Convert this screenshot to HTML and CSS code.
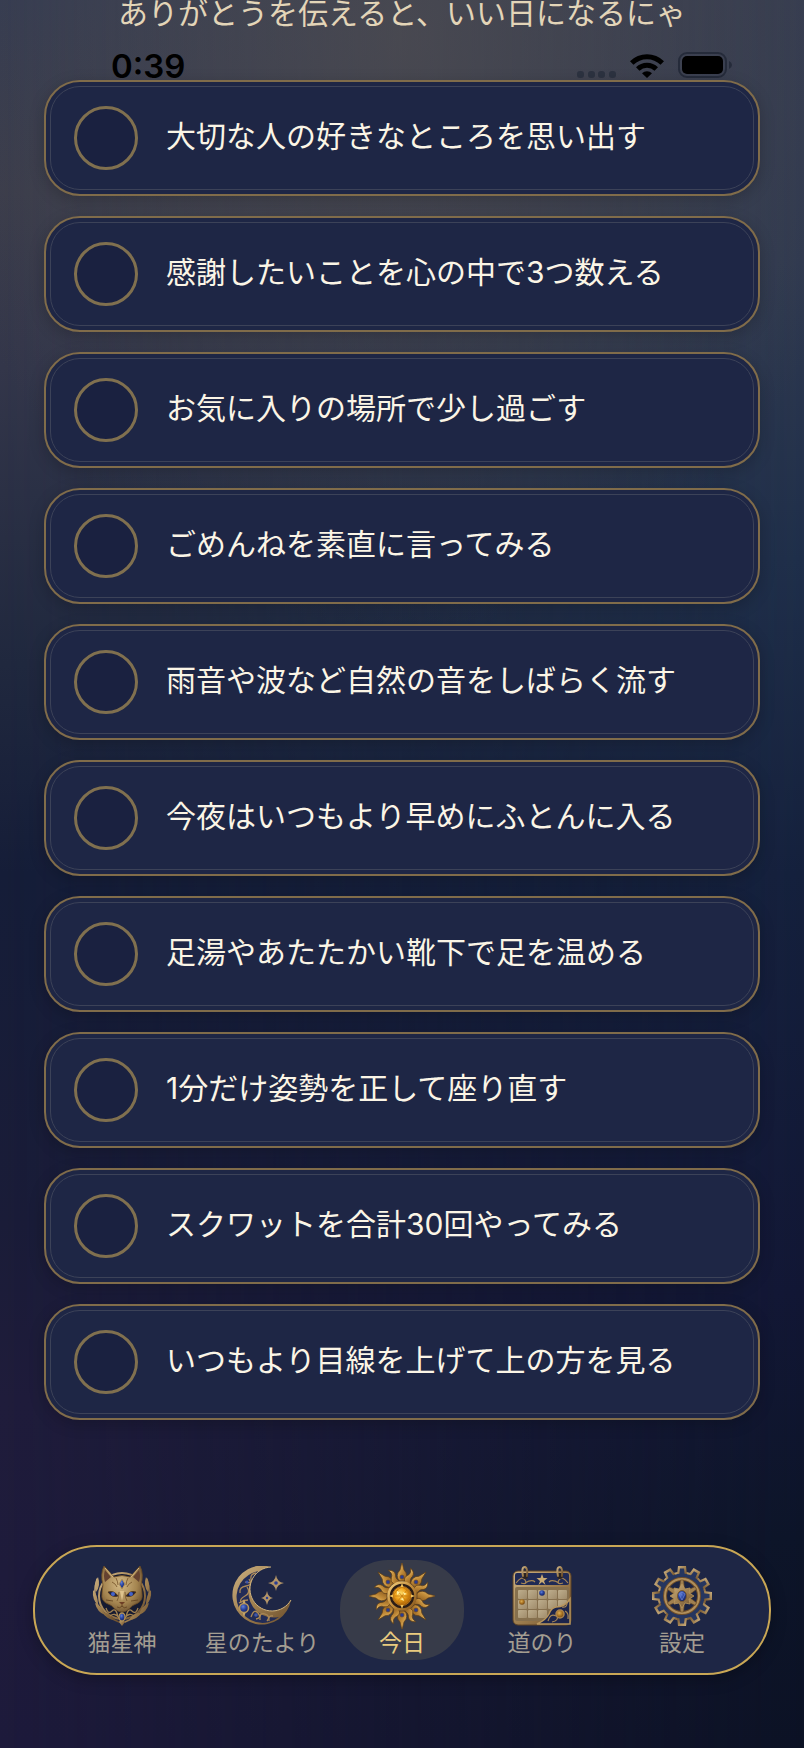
FILE: index.html
```html
<!DOCTYPE html>
<html lang="ja">
<head>
<meta charset="utf-8">
<meta name="viewport" content="width=device-width, initial-scale=1">
<title>今日</title>
<link rel="stylesheet" href="styles.css">
</head>
<body>
<svg class="defs" aria-hidden="true">
  <defs>
    <linearGradient id="gold" x1="0" y1="0" x2="1" y2="1"><stop offset="0" stop-color="#cdb283"/><stop offset=".5" stop-color="#a08050"/><stop offset="1" stop-color="#6b4d2b"/></linearGradient>
    <linearGradient id="bright" x1="0" y1="0" x2="1" y2="1"><stop offset="0" stop-color="#f3cf80"/><stop offset=".5" stop-color="#c28c39"/><stop offset="1" stop-color="#85551c"/></linearGradient>
    <radialGradient id="face" cx=".45" cy=".4" r=".7"><stop offset="0" stop-color="#d3b985"/><stop offset=".6" stop-color="#a4844f"/><stop offset="1" stop-color="#604528"/></radialGradient>
    <radialGradient id="sapphire" cx=".4" cy=".35" r=".7"><stop offset="0" stop-color="#6280d8"/><stop offset=".45" stop-color="#2a459f"/><stop offset="1" stop-color="#111d5c"/></radialGradient>
    <radialGradient id="amber" cx=".42" cy=".38" r=".65"><stop offset="0" stop-color="#ffe070"/><stop offset=".45" stop-color="#f0a31c"/><stop offset="1" stop-color="#9a5200"/></radialGradient>
    <radialGradient id="topaz" cx=".42" cy=".38" r=".65"><stop offset="0" stop-color="#d9ac55"/><stop offset=".5" stop-color="#ad7624"/><stop offset="1" stop-color="#6d420f"/></radialGradient>
    <linearGradient id="stone" x1="0" y1="0" x2="1" y2="1"><stop offset="0" stop-color="#beae8d"/><stop offset="1" stop-color="#a08c6b"/></linearGradient>
  </defs>
</svg>

<div class="screen">
  <h1 class="headline">ありがとうを伝えると、いい日になるにゃ</h1>

  <div class="status">
    <time class="clock">0:39</time>
    <div class="signals">
      <svg class="dots" viewBox="0 0 40 8" aria-hidden="true"><g fill="#2c3240"><rect x="1" y="1" width="7" height="7" rx="3"/><rect x="12" y="1" width="7" height="7" rx="3"/><rect x="22" y="1" width="7" height="7" rx="3"/><rect x="33" y="1" width="7" height="7" rx="3"/></g></svg>
      <svg class="wifi" viewBox="0 0 34 25" aria-hidden="true"><path d="M0 8.300a24 24 0 0 1 34 0l-3.500 3.500a19.200 19.200 0 0 0-27 0z"/><path d="M6 14.200a15.600 15.600 0 0 1 22 0l-3.500 3.500a10.700 10.700 0 0 0-15 0z"/><path d="M12 20.200a7.200 7.200 0 0 1 10 0L17 25z"/></svg>
      <svg class="battery" viewBox="0 0 54 26" aria-hidden="true"><rect x="1" y="1" width="47" height="24" rx="8" fill="none" stroke="#252b3a" stroke-width="2"/><rect x="4" y="4" width="41" height="18" rx="5"/><path d="M51 9q3 1.500 3 4t-3 4z" fill="#252b3a"/></svg>
    </div>
  </div>

  <main class="tasks">
    <label class="task"><input class="check" type="checkbox"><span class="text">大切な人の好きなところを思い出す</span></label>
    <label class="task"><input class="check" type="checkbox"><span class="text">感謝したいことを心の中で3つ数える</span></label>
    <label class="task"><input class="check" type="checkbox"><span class="text">お気に入りの場所で少し過ごす</span></label>
    <label class="task"><input class="check" type="checkbox"><span class="text">ごめんねを素直に言ってみる</span></label>
    <label class="task"><input class="check" type="checkbox"><span class="text">雨音や波など自然の音をしばらく流す</span></label>
    <label class="task"><input class="check" type="checkbox"><span class="text">今夜はいつもより早めにふとんに入る</span></label>
    <label class="task"><input class="check" type="checkbox"><span class="text">足湯やあたたかい靴下で足を温める</span></label>
    <label class="task"><input class="check" type="checkbox"><span class="text">1分だけ姿勢を正して座り直す</span></label>
    <label class="task"><input class="check" type="checkbox"><span class="text">スクワットを合計30回やってみる</span></label>
    <label class="task"><input class="check" type="checkbox"><span class="text">いつもより目線を上げて上の方を見る</span></label>
  </main>

  <nav class="tabs" aria-label="メイン">
    <a class="tab" href="#cat">
      <svg class="icon" viewBox="0 0 60 60" aria-hidden="true">
        <circle cx="30" cy="30" r="23" fill="#161a30" stroke="url(#gold)" stroke-width="2"/>
        <g fill="none" stroke="url(#gold)" stroke-width="1.500" stroke-linecap="round"><path d="M5 13C-1 32 5 48 27 56"/><path d="M55 13c6 19 0 35-22 43"/></g>
        <g fill="url(#gold)"><path d="M6 11q-5 8-2 15 5-6 2-15zM1 24q-1 10 5 15 0-10-5-15zM3 37q2 9 10 12-2-9-10-12zM10 46q4 7 13 8-4-7-13-8z"/><path d="M54 11q5 8 2 15-5-6-2-15zM59 24q1 10-5 15 0-10 5-15zM57 37q-2 9-10 12 2-9 10-12zM50 46q-4 7-13 8 4-7 13-8z"/></g>
        <g fill="none" stroke="#a08050" stroke-width="1.300"><path d="M14 42q2 7 6 3t6 6M46 42q-2 7-6 3t-6 6M18 50q5-4 9 2M42 50q-5-4-9 2"/></g>
        <path d="M12 0Q8 8 11 19q-1 5-1 9-1 6 4 9 6 2 9 6 3 3 7 3t7-3q3-4 9-6 5-3 4-9 0-4-1-9Q52 8 48 0L38 11q-8-3-16 0z" fill="url(#face)" stroke="#6f4e25" stroke-width=".8"/>
        <path d="M13 4q-2 6 0 12l6-5zM47 4q2 6 0 12l-6-5z" fill="#654230"/>
        <path d="M13 2l8 9M47 2l-8 9" stroke="#d4b781"/>
        <g fill="none" stroke="#79582e" stroke-width=".9"><path d="M24 12q2 4 2 7M36 12q-2 4-2 7M20 16q4 2 5 5M40 16q-4 2-5 5"/><path d="M27 26q0 6-2 9M33 26q0 6 2 9"/></g>
        <path d="M28 25l2 10 2-10z" fill="#dfc38d"/>
        <path d="M16 26q6-2 10 4-6 2-10-4zM44 26q-6-2-10 4 6 2 10-4z" fill="#1b2148" stroke="#513312" stroke-width=".8"/>
        <circle cx="21" cy="28" r="2" fill="#4463c9"/><circle cx="39" cy="28" r="2" fill="#4463c9"/>
        <path d="M27 36h6l-3 3z" fill="#6d3e25"/><path d="M30 39v2M30 40q-2 3-5 1M30 40q2 3 5 1M14 34l7 1M46 34l-7 1" fill="none" stroke="#60401f" stroke-width=".8"/>
        <path d="M30 13l3 5-3 5-3-5z" fill="url(#sapphire)" stroke="#b39257"/>
        <path d="M30 52l3 4-3 4-3-4z" fill="url(#gold)"/>
        <ellipse cx="30" cy="51" rx="3" ry="4" fill="url(#sapphire)" stroke="#b39257" stroke-width="1.300"/>
      </svg>
      <span>猫星神</span>
    </a>
    <a class="tab" href="#letters">
      <svg class="icon" viewBox="0 0 60 60" aria-hidden="true">
        <path d="M39 1A29.500 29.500 0 1 0 59 34A22 22 0 1 1 39 1z" fill="url(#gold)"/>
        <path d="M28 5A26 26 0 1 0 47 51A25.300 25.300 0 0 1 28 5z" fill="#222c57"/>
        <g fill="none" stroke="#a98756" stroke-width="1.300"><path d="M24 7q-6 1-5 6t-6 3"/><path d="M17 13q4 6-3 7t-6 7"/><path d="M15 21q4 6-2 9t-4 7"/><path d="M19 51q3-9 7-4t-2 6"/><path d="M28 54q-1-8 5-6t2 7"/><path d="M37 55q-1-6 4-5"/><path d="M16 34q-5 0-9 3"/></g>
        <path d="M59 34A22 22 0 1 1 39 1" fill="none" stroke="#cfb27d" stroke-width="1"/>
        <circle cx="12" cy="42" r="4.500" fill="url(#sapphire)" stroke="#b6955c" stroke-width="1.600"/>
        <path d="M12 33l1.500 4h-3zM12 51l1.500-4h-3z" fill="#c4a469"/>
        <circle cx="15" cy="16" r="1.500" fill="#3f56ab"/><circle cx="24" cy="49" r="1.800" fill="#3f56ab"/>
        <path d="M44 9q1 7 8 8-7 1-8 8-1-7-8-8 7-1 8-8zM35 25q1 6 6 7-5 1-6 7-1-6-6-7 5-1 6-7z" fill="#b29468"/>
        <circle cx="44" cy="17" r="1.800" fill="#293d94"/><circle cx="35" cy="32" r="1.200" fill="#293d94"/>
      </svg>
      <span>星のたより</span>
    </a>
    <a class="tab active" href="#today" aria-current="page">
      <svg class="icon sun" viewBox="-33 -33 66 66" aria-hidden="true">
        <defs>
          <path id="ray" d="M0-34l2 8q5 5 1 11h-6q-4-6 1-11z" fill="url(#bright)" stroke="#5b3b16" stroke-width=".7"/>
          <path id="flame" d="M-3-14q-3-4 0-7 3-3 0-8 6 2 5 7-2 4 2 8z" fill="url(#bright)" stroke="#5b3b16" stroke-width=".7"/>
        </defs>
        <use href="#ray"/><use href="#ray" transform="rotate(45)"/><use href="#ray" transform="rotate(90)"/><use href="#ray" transform="rotate(135)"/><use href="#ray" transform="rotate(180)"/><use href="#ray" transform="rotate(225)"/><use href="#ray" transform="rotate(270)"/><use href="#ray" transform="rotate(315)"/>
        <use href="#flame" transform="rotate(23)"/><use href="#flame" transform="rotate(68)"/><use href="#flame" transform="rotate(113)"/><use href="#flame" transform="rotate(158)"/><use href="#flame" transform="rotate(203)"/><use href="#flame" transform="rotate(248)"/><use href="#flame" transform="rotate(293)"/><use href="#flame" transform="rotate(338)"/>
        <g fill="#2a3c94" stroke="#6b481b" stroke-width=".6"><circle cy="-19" r="2"/><circle cy="19" r="2"/><circle cx="14" cy="-14" r="2"/><circle cx="-14" cy="-14" r="2"/><circle cx="14" cy="14" r="2"/><circle cx="-14" cy="14" r="2"/></g>
        <circle r="13.500" fill="#2b1d16" stroke="url(#bright)" stroke-width="2.500"/>
        <circle r="9.500" fill="url(#amber)" stroke="#a56c20"/>
        <path d="M-5-6L0-9l5 3 4 6-4 6-5 3-5-3-4-6zM-5-6L5 6M5-6L-5 6M-9 0H9" fill="none" stroke="#c57c10" stroke-width=".8"/>
        <path d="M-5-5l3 1-3 3zM1-4l4 2-3 1zM-2 3l3-1 1 3z" fill="#fff0a0"/>
        <path d="M0-13l1.500 4h-3zM0 13l1.500-4h-3zM-13 0l4-1.500v3zM13 0l-4-1.500v3z" fill="#f0c25e"/>
      </svg>
      <span>今日</span>
    </a>
    <a class="tab" href="#path">
      <svg class="icon" viewBox="0 0 60 60" aria-hidden="true">
        <rect x="1" y="5" width="58" height="54" rx="5" fill="url(#gold)" stroke="#5e4325"/>
        <rect x="3" y="7" width="54" height="12" rx="2" fill="#202a55"/>
        <g fill="none" stroke="#a68656" stroke-width="1.200"><path d="M4 17q6-8 9-3t-4 3M13 17q7-4 10-1M56 17q-6-8-9-3t4 3M47 17q-7-4-10-1"/></g>
        <path d="M30 8l1.500 4h4l-3.500 3 1.500 4-3.500-3-3.500 3 1.500-4-3.500-3h4z" fill="#c9aa73"/>
        <rect x="3" y="21" width="54" height="34" rx="2" fill="#86704e"/>
        <g fill="url(#stone)"><rect x="6" y="24" width="9" height="9" rx="1"/><rect x="16" y="24" width="9" height="9" rx="1"/><rect x="26" y="24" width="9" height="9" rx="1"/><rect x="36" y="24" width="9" height="9" rx="1"/><rect x="46" y="24" width="9" height="9" rx="1"/><rect x="6" y="34" width="9" height="9" rx="1"/><rect x="16" y="34" width="9" height="9" rx="1"/><rect x="26" y="34" width="9" height="9" rx="1"/><rect x="36" y="34" width="9" height="9" rx="1"/><rect x="46" y="34" width="9" height="9" rx="1"/><rect x="6" y="44" width="9" height="8" rx="1"/><rect x="16" y="44" width="9" height="8" rx="1"/><rect x="26" y="44" width="9" height="8" rx="1"/></g>
        <path d="M58 33q-5 8-14 8-5 1-7 7-3 6-12 10h33z" fill="#1c244b" stroke="#b7955c" stroke-width="1.500"/>
        <path d="M36 55q2-8 8-5M40 56q7-1 5-7M50 41q5 1 5-4M53 45q4 2 3 8" fill="none" stroke="#a68656" stroke-width="1.200"/>
        <circle cx="48" cy="48" r="4" fill="url(#topaz)" stroke="#a8824f" stroke-width="1.500"/>
        <circle cx="10" cy="36" r="2.800" fill="url(#topaz)"/><circle cx="30" cy="27" r="2.800" fill="url(#sapphire)"/>
        <g fill="#2b2321"><circle cx="13" cy="10" r="3"/><circle cx="48" cy="10" r="3"/></g>
        <g fill="none" stroke="url(#gold)" stroke-width="2" stroke-linecap="round"><path d="M11 10q-2-9 2-9 3 1 2 9"/><path d="M46 10q-2-9 2-9 3 1 2 9"/></g>
      </svg>
      <span>道のり</span>
    </a>
    <a class="tab" href="#settings">
      <svg class="icon" viewBox="-30 -30 60 60" aria-hidden="true">
        <defs>
          <path id="tooth" d="M-5-21l1-9h8l1 9z"/>
          <path id="toothfill" d="M-3-19l1-8.500h4l1 8.500z"/>
          <path id="spoke" d="M-1.500-16h3l1 9h-5z"/>
        </defs>
        <g fill="url(#gold)"><circle r="24.500"/><use href="#tooth"/><use href="#tooth" transform="rotate(30)"/><use href="#tooth" transform="rotate(60)"/><use href="#tooth" transform="rotate(90)"/><use href="#tooth" transform="rotate(120)"/><use href="#tooth" transform="rotate(150)"/><use href="#tooth" transform="rotate(180)"/><use href="#tooth" transform="rotate(210)"/><use href="#tooth" transform="rotate(240)"/><use href="#tooth" transform="rotate(270)"/><use href="#tooth" transform="rotate(300)"/><use href="#tooth" transform="rotate(330)"/></g>
        <g fill="#26365f"><circle r="22.500"/><use href="#toothfill"/><use href="#toothfill" transform="rotate(30)"/><use href="#toothfill" transform="rotate(60)"/><use href="#toothfill" transform="rotate(90)"/><use href="#toothfill" transform="rotate(120)"/><use href="#toothfill" transform="rotate(150)"/><use href="#toothfill" transform="rotate(180)"/><use href="#toothfill" transform="rotate(210)"/><use href="#toothfill" transform="rotate(240)"/><use href="#toothfill" transform="rotate(270)"/><use href="#toothfill" transform="rotate(300)"/><use href="#toothfill" transform="rotate(330)"/></g>
        <circle r="17" fill="#1c2443" stroke="#6f4e29" stroke-width="4"/>
        <circle r="17" fill="none" stroke="#b08f5c" stroke-width="2"/>
        <g fill="#a08050" stroke="#654623" stroke-width=".6"><use href="#spoke"/><use href="#spoke" transform="rotate(60)"/><use href="#spoke" transform="rotate(120)"/><use href="#spoke" transform="rotate(180)"/><use href="#spoke" transform="rotate(240)"/><use href="#spoke" transform="rotate(300)"/></g>
        <path d="M0-12l3 5 5-1-1 5 5 3-5 3 1 5-5-1-3 5-3-5-5 1 1-5-5-3 5-3-1-5 5 1z" fill="url(#gold)" stroke="#b7955c" stroke-width=".8"/>
        <ellipse rx="4.500" ry="5.500" fill="url(#sapphire)" stroke="#7a5a30"/>
        <path d="M-3-2l3-2 3 2-3 6z" fill="none" stroke="#8095dd" stroke-width=".6"/>
      </svg>
      <span>設定</span>
    </a>
  </nav>
</div>
</body>
</html>
```
FILE: styles.css
```css
* { box-sizing: border-box; }

body {
  margin: 0;
  background: #12162f;
  color: #fbf5e6;
  font-family: "Noto Sans CJK JP", sans-serif;
  font-weight: 400;
}

.defs {
  display: block;
  width: 0;
  height: 0;
}

.screen {
  position: relative;
  isolation: isolate;
  display: flex;
  flex-direction: column;
  min-height: 100vh;
  overflow: hidden;
  background: linear-gradient(#353c50, #303a50 15%, #1f2f4a 32%, #15213d 50%, #121735 74%, #0d1529 88%, #0c1225);
}

/* Left side of the night sky, fading toward the right edge */
.screen::before {
  content: "";
  position: absolute;
  inset: 0;
  z-index: -2;
  background: linear-gradient(#343b51, #3a3c4b 11%, #33364a 21%, #20283e 38%, #151d38 50%, #1a1c38 70%, #1f1c3b 80%, #1d1a3b);
  mask-image: linear-gradient(to right, #000, transparent);
}

/* Warm glow at the top */
.screen::after {
  content: "";
  position: absolute;
  inset: 0;
  z-index: -1;
  background: radial-gradient(ellipse 60% 34% at 50% 2%, #55515199, transparent);
}

.headline {
  margin: 0;
  height: 28px;
  font-size: 30px;
  font-weight: 400;
  line-height: 22px;
  text-align: center;
  color: #e3d5b8;
}

.status {
  display: flex;
  justify-content: space-between;
  align-items: flex-end;
  height: 52px;
  padding: 0 72px 2px 111px;
  color: #000;
}

.clock {
  font-family: Inter, sans-serif;
  font-size: 33px;
  font-weight: 600;
  line-height: 24px;
}

.signals {
  display: flex;
  align-items: flex-end;
  gap: 14px;
}

.dots { width: 40px; height: 8px; }
.wifi { width: 34px; height: 25px; }
.battery { width: 54px; height: 26px; }

.tasks {
  display: flex;
  flex-direction: column;
  gap: 20px;
  padding: 0 44px;
}

.task {
  position: relative;
  display: flex;
  align-items: center;
  gap: 28px;
  min-height: 116px;
  padding: 24px 28px;
  border: 2px solid #806c4a;
  border-radius: 36px;
  background: #1e2645;
  box-shadow: 0 4px 16px #0003;
}

.task::after {
  content: "";
  position: absolute;
  inset: 4px;
  border: 1px solid #3c4258;
  border-radius: 30px;
  pointer-events: none;
}

.check {
  appearance: none;
  flex: none;
  width: 64px;
  height: 64px;
  margin: 0;
  border: 3px solid #80704f;
  border-radius: 50%;
  background: #1a2140;
}

.check:checked { background: #c7a55c; }

.text {
  padding-bottom: 4px;
  font-family: Inter, "Noto Sans CJK JP", sans-serif;
  font-size: 30px;
  line-height: 40px;
}

.tabs {
  display: flex;
  margin: auto 33px 73px;
  padding: 13px 17px;
  border: 2px solid #c9a755;
  border-radius: 64px;
  background: #1e2645;
  box-shadow: 0 4px 16px #0004;
}

.tab {
  flex: 1;
  display: flex;
  flex-direction: column;
  align-items: center;
  height: 100px;
  margin: 0 8px;
  padding-top: 6px;
  gap: 4px;
  border-radius: 48px;
  color: #a39d91;
  font-size: 23px;
  line-height: 22px;
  white-space: nowrap;
  text-decoration: none;
}

.tab.active {
  padding-top: 3px;
  gap: 1px;
  background: #373b49;
  color: #e9cb7f;
}

.icon {
  flex: none;
  width: 60px;
  height: 60px;
}

.icon.sun {
  width: 66px;
  height: 66px;
}
```
